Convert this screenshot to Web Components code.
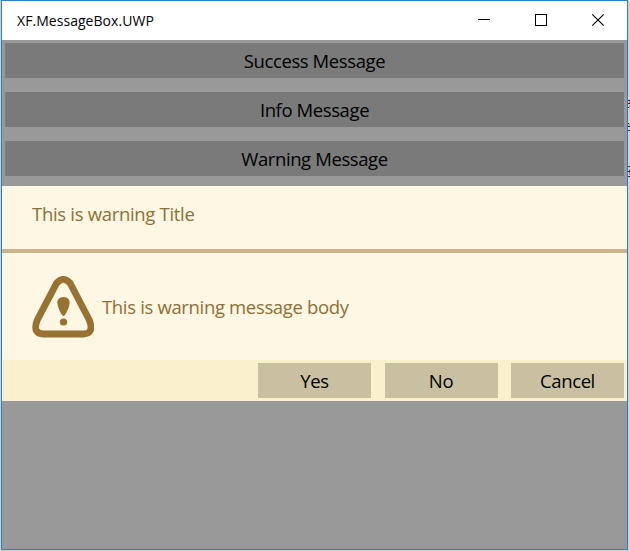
<!DOCTYPE html>
<html lang="en"><head><meta charset="utf-8"><title>XF.MessageBox.UWP</title>
<style>
html,body{margin:0;height:551px;overflow:hidden}
body{background:#d0d0d0;font-family:"Open Sans","Noto Sans",sans-serif;font-size:18.5px;color:#000}
</style></head><body>
<app-window></app-window>
<script>
const define=(name,html)=>customElements.define(name,class extends HTMLElement{
  constructor(){super();this.attachShadow({mode:'open'}).innerHTML=html;}
});
define('flat-button',`<style>
:host{display:flex;align-items:center;justify-content:center;box-sizing:border-box;height:35px;background:var(--face,#7a7a7a);line-height:26px;padding-top:1px;white-space:nowrap;letter-spacing:-.4px}
</style><span><slot></slot></span>`);
define('title-bar',`<style>
:host{display:flex;height:39px;background:#fff;align-items:center;justify-content:space-between;font-size:14px;line-height:20px}
span{margin-left:15px;letter-spacing:.05px;padding-top:1px}
svg{display:block}
</style><span><slot></slot></span>
<svg width="173" height="39" fill="none" stroke="#000"><path d="M24 18.500h12M81.500 13.500h11v11h-11z" shape-rendering="crispEdges"/><path d="M138.300 13.300l11.400 11.400M149.700 13.300l-11.400 11.400" stroke-width="1.100"/></svg>`);
define('warning-icon',`<style>:host{display:block;width:62px;height:62px}svg{display:block}</style>
<svg width="62" height="62" viewBox="0 0 62 62"><path d="M24.600 7.200Q31.300 -.5 38.200 7.200L57.300 44Q62.500 57.500 51.500 58H11.500Q0 57.500 5.300 44Z" fill="none" stroke="#987233" stroke-width="6.800" stroke-linejoin="round"/><path d="M31.500 21c-4.300 0-6.600 3-6.100 6.500.6 4.500 3.100 9.400 4.700 11.700q1.400 1.600 2.800 0c1.600-2.300 4.100-7.200 4.700-11.700.5-3.500-1.800-6.500-6.100-6.500z" fill="#987233"/><ellipse cx="31.500" cy="46" rx="3.700" ry="3.500" fill="#987233"/></svg>`);
define('message-box',`<style>
:host{display:flex;flex-direction:column;height:215px;background:#fdf7e4;color:#8f6f35}
header{box-sizing:border-box;height:67px;padding:15px 30px 0;border-bottom:4px solid #cbb488;line-height:26px;letter-spacing:-.31px}
main{display:flex;align-items:center;height:107px;padding-left:30px;gap:8px;line-height:26px;letter-spacing:-.34px}
footer{display:grid;box-sizing:border-box;grid-template-columns:113px 113px 113px;justify-content:end;column-gap:13.500px;height:41px;padding:3px 3px 0;background:#f9f0cd;color:#000;--face:#c8c0a0}
</style><header><slot name="title"></slot></header><main><warning-icon></warning-icon><span><slot></slot></span></main><footer><slot name="actions"></slot></footer>`);
define('edge-strip',`<style>:host{display:block;width:2px;height:551px;background:#d2d2d2}svg{display:block}</style>
<svg width="2" height="551" shape-rendering="crispEdges"><path d="M0 100h2v1H0zM0 103h2v1H0zM0 107h1v1H0zM0 123h1v1H0zM0 126h2v1H0zM0 130h2v1H0zM0 166h2v1H0zM1 170h1v1H1zM0 171h2v1H0zM0 176h2v1H0z" fill="#172d54"/><path d="M1 101h1v2H1zM1 105h1v2H1zM1 124h1v2H1zM1 172h1v3H1z" fill="#b87d68"/></svg>`);
define('app-window',`<style>
:host{display:grid;grid-template-columns:1px 627px 2px;height:551px}
.w{grid-column:2;box-sizing:border-box;height:550px;border:1px solid #2581cf;background:#999}
.list{display:flex;flex-direction:column;gap:14px;padding:3px 3px 10px}
</style><div class="w"><title-bar>XF.MessageBox.UWP</title-bar>
<div class="list"><flat-button>Success Message</flat-button><flat-button>Info Message</flat-button><flat-button>Warning Message</flat-button></div>
<message-box><span slot="title">This is warning Title</span>This is warning message body<flat-button slot="actions">Yes</flat-button><flat-button slot="actions">No</flat-button><flat-button slot="actions">Cancel</flat-button></message-box></div><edge-strip></edge-strip>`);
</script></body></html>
